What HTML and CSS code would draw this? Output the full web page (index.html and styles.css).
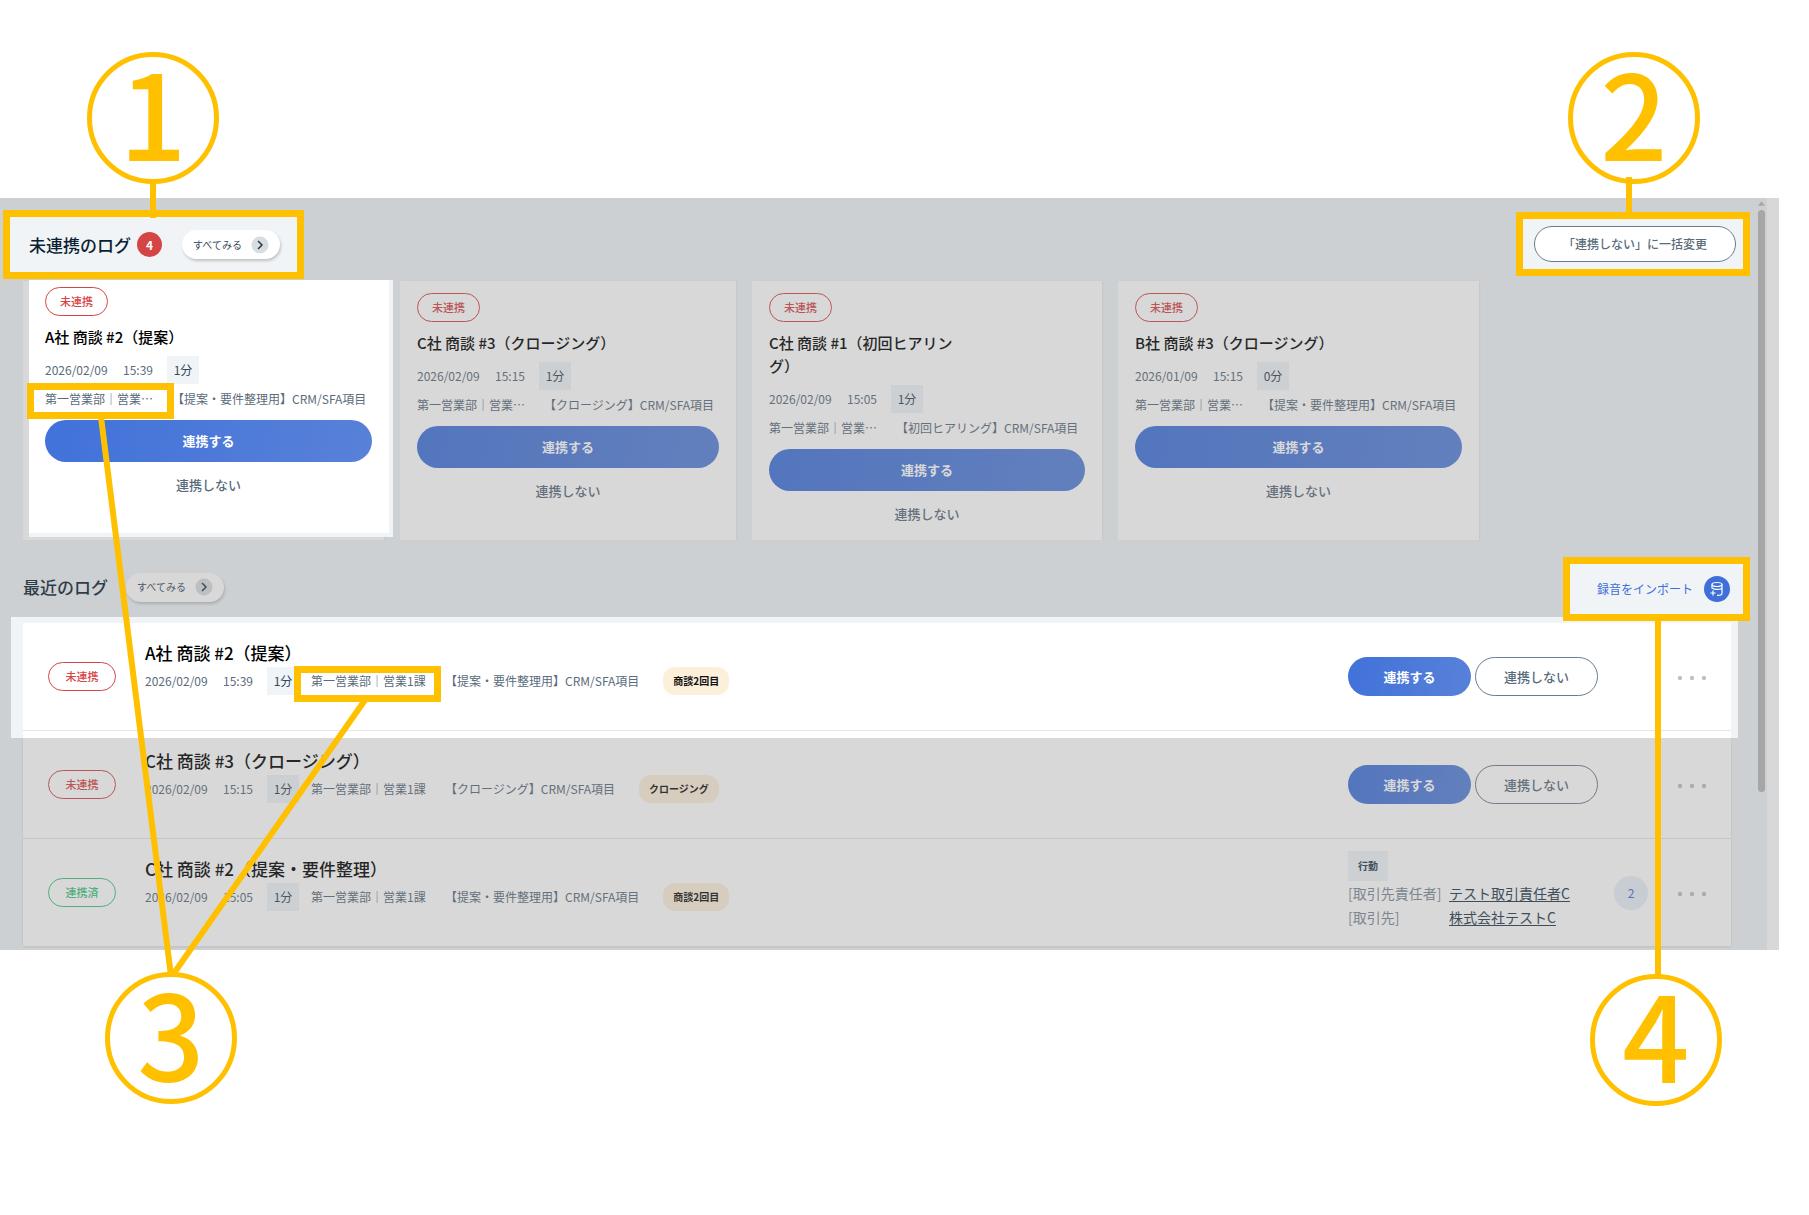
FILE: index.html
```html
<!DOCTYPE html>
<html lang="ja">
<head>
<meta charset="utf-8">
<title>商談ログ</title>
<link rel="stylesheet" href="styles.css">
</head>
<body>
<main class="panel">
  <div class="dim"></div>

  <section class="section">
    <header class="section-head section-head--pending">
      <div class="callout callout--title">
        <h2 class="section-title">未連携のログ</h2>
        <span class="count">4</span>
        <button class="see-all" type="button">すべてみる
          <svg class="see-all-icon" viewBox="0 0 18 18"><circle cx="9" cy="9" r="8.5" fill="#d8dde1"/><path d="M7 5l4 4-4 4" fill="none" stroke="#24394d" stroke-width="1.5"/></svg>
        </button>
      </div>
      <div class="callout callout--bulk">
        <button class="btn btn-outline btn-bulk" type="button">「連携しない」に一括変更</button>
      </div>
    </header>

    <ul class="cards">
      <li class="card-slot card-slot--wide">
        <article class="card card--focus">
          <span class="status">未連携</span>
          <h3 class="card-title">A社 商談 #2（提案）</h3>
          <p class="meta"><span class="date">2026/02/09</span><span class="time">15:39</span><span class="minutes">1分</span></p>
          <p class="team"><span class="team-name">第一営業部｜営業…</span><span>【提案・要件整理用】CRM/SFA項目</span></p>
          <button class="btn btn-primary btn-block" type="button">連携する</button>
          <button class="btn-text" type="button">連携しない</button>
        </article>
      </li>
      <li class="card-slot card-slot--narrow">
        <article class="card">
          <span class="status">未連携</span>
          <h3 class="card-title">C社 商談 #3（クロージング）</h3>
          <p class="meta"><span class="date">2026/02/09</span><span class="time">15:15</span><span class="minutes">1分</span></p>
          <p class="team"><span class="team-name">第一営業部｜営業…</span><span>【クロージング】CRM/SFA項目</span></p>
          <button class="btn btn-primary btn-block" type="button">連携する</button>
          <button class="btn-text" type="button">連携しない</button>
        </article>
      </li>
      <li class="card-slot card-slot--medium">
        <article class="card">
          <span class="status">未連携</span>
          <h3 class="card-title">C社 商談 #1（初回ヒアリング）</h3>
          <p class="meta"><span class="date">2026/02/09</span><span class="time">15:05</span><span class="minutes">1分</span></p>
          <p class="team"><span class="team-name">第一営業部｜営業…</span><span>【初回ヒアリング】CRM/SFA項目</span></p>
          <button class="btn btn-primary btn-block" type="button">連携する</button>
          <button class="btn-text" type="button">連携しない</button>
        </article>
      </li>
      <li class="card-slot card-slot--wide">
        <article class="card">
          <span class="status">未連携</span>
          <h3 class="card-title">B社 商談 #3（クロージング）</h3>
          <p class="meta"><span class="date">2026/01/09</span><span class="time">15:15</span><span class="minutes">0分</span></p>
          <p class="team"><span class="team-name">第一営業部｜営業…</span><span>【提案・要件整理用】CRM/SFA項目</span></p>
          <button class="btn btn-primary btn-block" type="button">連携する</button>
          <button class="btn-text" type="button">連携しない</button>
        </article>
      </li>
    </ul>
  </section>

  <section class="section">
    <header class="section-head section-head--recent">
      <div class="recent-title">
        <h2 class="section-title">最近のログ</h2>
        <button class="see-all" type="button">すべてみる
          <svg class="see-all-icon" viewBox="0 0 18 18"><circle cx="9" cy="9" r="8.5" fill="#d8dde1"/><path d="M7 5l4 4-4 4" fill="none" stroke="#24394d" stroke-width="1.5"/></svg>
        </button>
      </div>
      <div class="callout callout--import">
        <a class="import" href="#import">録音をインポート
          <svg class="import-icon" viewBox="0 0 26 26"><circle cx="13" cy="13" r="13" fill="#3f6fd8"/><g fill="none" stroke="#fff" stroke-width="1.2"><ellipse cx="13" cy="8.500" rx="5" ry="2"/><path d="M8 8.500v4M18 8.500v9c0 1-2 1.900-5 1.900M8.500 12.200c1 .8 2.500 1.100 4.500 1.100 3 0 5-.6 5-1.600M6.500 17h5M9 14.500v5"/></g></svg>
        </a>
      </div>
    </header>

    <ul class="rows">
      <li class="row row--focus">
        <div class="row-body">
          <span class="status status--row">未連携</span>
          <div class="info">
            <h3 class="row-title">A社 商談 #2（提案）</h3>
            <p class="meta"><span class="date">2026/02/09</span><span class="time">15:39</span><span class="minutes">1分</span><span class="dept">第一営業部｜営業1課</span><span>【提案・要件整理用】CRM/SFA項目</span><span class="tag">商談2回目</span></p>
          </div>
          <div class="actions">
            <button class="btn btn-primary" type="button">連携する</button>
            <button class="btn btn-outline" type="button">連携しない</button>
          </div>
          <button class="more" type="button" aria-label="メニュー"><svg viewBox="0 0 30 6"><g fill="#b9c4cc"><circle cx="3" cy="3" r="2.200"/><circle cx="15" cy="3" r="2.200"/><circle cx="27" cy="3" r="2.200"/></g></svg></button>
        </div>
      </li>
      <li class="row">
        <div class="row-body">
          <span class="status status--row">未連携</span>
          <div class="info">
            <h3 class="row-title">C社 商談 #3（クロージング）</h3>
            <p class="meta"><span class="date">2026/02/09</span><span class="time">15:15</span><span class="minutes">1分</span><span class="dept">第一営業部｜営業1課</span><span>【クロージング】CRM/SFA項目</span><span class="tag">クロージング</span></p>
          </div>
          <div class="actions">
            <button class="btn btn-primary" type="button">連携する</button>
            <button class="btn btn-outline" type="button">連携しない</button>
          </div>
          <button class="more" type="button" aria-label="メニュー"><svg viewBox="0 0 30 6"><g fill="#b9c4cc"><circle cx="3" cy="3" r="2.200"/><circle cx="15" cy="3" r="2.200"/><circle cx="27" cy="3" r="2.200"/></g></svg></button>
        </div>
      </li>
      <li class="row">
        <div class="row-body">
          <span class="status status--row status--done">連携済</span>
          <div class="info">
            <h3 class="row-title">C社 商談 #2（提案・要件整理）</h3>
            <p class="meta"><span class="date">2026/02/09</span><span class="time">15:05</span><span class="minutes">1分</span><span class="dept">第一営業部｜営業1課</span><span>【提案・要件整理用】CRM/SFA項目</span><span class="tag">商談2回目</span></p>
          </div>
          <div class="linked">
            <span class="kind">行動</span>
            <dl class="linked-list">
              <dt>[取引先責任者]</dt><dd><a href="#contact">テスト取引責任者C</a></dd>
              <dt>[取引先]</dt><dd><a href="#account">株式会社テストC</a></dd>
            </dl>
          </div>
          <span class="linked-count">2</span>
          <button class="more" type="button" aria-label="メニュー"><svg viewBox="0 0 30 6"><g fill="#b9c4cc"><circle cx="3" cy="3" r="2.200"/><circle cx="15" cy="3" r="2.200"/><circle cx="27" cy="3" r="2.200"/></g></svg></button>
        </div>
      </li>
    </ul>
  </section>

  <div class="gutter"></div>
  <svg class="scroll-arrow" viewBox="0 0 8 5"><path d="M4 0l4 5H0z" fill="#a6a6a6"/></svg>
  <div class="scroll-thumb"></div>

  <div class="notes">
    <div class="frame frame--card-dept"></div>
    <div class="frame frame--row-dept"></div>
    <svg class="leads" viewBox="0 0 400 600"><path d="M101 40L171 599M365 323L172 599" fill="none" stroke="#ffc000" stroke-width="6"/></svg>
    <div class="lead lead--1"></div>
    <div class="lead lead--2"></div>
    <div class="lead lead--4"></div>
    <div class="number number--1">1</div>
    <div class="number number--2">2</div>
    <div class="number number--3">3</div>
    <div class="number number--4">4</div>
  </div>
</main>
</body>
</html>
```
FILE: styles.css
```css
:root {
  --amber: #ffc000;
  --surface: #f0f4f6;
  --ink: #0c1f33;
  --muted: #5a6b7b;
  --red: #d64545;
  --blue: #3f6fd8;
}

* { box-sizing: border-box; }

body {
  margin: 0;
  min-height: 100vh;
  padding: 198px 30px 264px 0;
  background: #fff;
  color: var(--muted);
  font: 12px/20px "Noto Sans CJK JP", "Noto Sans", sans-serif;
}

h2, h3, p, ul, dl, dd { margin: 0; padding: 0; }
ul { list-style: none; }
button { font: inherit; color: inherit; border: 0; background: none; padding: 0; cursor: pointer; }

.panel {
  position: relative;
  padding: 12px 12px 3px 0;
  background: var(--surface);
}

/* grey veil over everything that is not in focus */
.dim {
  position: absolute;
  inset: 0;
  z-index: 1;
  background: rgba(127, 127, 127, .3);
}

.section-head { display: flex; justify-content: space-between; padding-right: 17px; }
.section-head--pending { padding-left: 3px; align-items: flex-start; margin-bottom: 2px; }
.section-head--recent { padding-left: 23px; margin: 17px 0 2px; }
.recent-title { display: flex; align-items: center; gap: 18px; padding-bottom: 4px; }
.section-title { font-size: 17px; line-height: 24px; font-weight: 500; color: var(--ink); }

.callout {
  position: relative;
  z-index: 3;
  display: flex;
  align-items: center;
  border: 7px solid var(--amber);
  background: var(--surface);
}
.callout--title { height: 69px; padding: 0 17px 0 19px; }
.callout--bulk { height: 64px; margin-top: 2px; padding: 0 7px 0 11px; }
.callout--import { height: 64px; padding: 0 13px 0 27px; }

.count {
  width: 25px;
  height: 25px;
  margin: 0 20px 0 6px;
  border-radius: 50%;
  background: var(--red);
  color: #fff;
  font-weight: 700;
  line-height: 25px;
  text-align: center;
}

.see-all {
  display: flex;
  align-items: center;
  justify-content: space-between;
  width: 98px;
  height: 29px;
  padding: 0 11px;
  border-radius: 15px;
  background: #fff;
  box-shadow: 1px 2px 3px rgba(0, 0, 0, .2);
  font-size: 10px;
  color: #33475b;
}
.see-all-icon { width: 18px; height: 18px; }

.import { display: flex; align-items: center; gap: 11px; color: var(--blue); text-decoration: none; }
.import-icon { width: 26px; height: 26px; }

.btn { height: 39px; border-radius: 21px; font-size: 13px; white-space: nowrap; }
.btn-primary { background: linear-gradient(100deg, #4172da, #5881d8); color: #fff; font-weight: 700; }
.btn-outline { border: 1px solid #6b7c8c; background: transparent; color: var(--muted); font-weight: 500; }
.btn-bulk { width: 202px; height: 36px; background: #fff; font-size: 12px; }
.btn-block { width: 100%; height: 42px; margin-top: 11px; }
.btn-text { display: block; margin: 13px auto 0; font-size: 13px; font-weight: 500; }

.cards { display: flex; gap: 16px; padding-left: 23px; height: 259px; }
.card-slot { flex: none; background: #fff; box-shadow: 1px 0 2px rgba(0, 0, 0, .06); }
.card-slot--wide { width: 361px; }
.card-slot--narrow { width: 336px; }
.card-slot--medium { width: 350px; }
.card { padding: 12px 17px 0; }
.card--focus {
  position: relative;
  z-index: 2;
  height: 257px;
  margin: -1px -9px 0 6px;
  padding: 7px 17px 0 16px;
  border: solid var(--surface);
  border-width: 0 4px 4px 0;
  background: #fff;
}
.card-title { max-width: 190px; margin-top: 9px; font-size: 15px; line-height: 23px; font-weight: 500; color: #000; white-space: nowrap; }
.card-slot--medium .card-title { white-space: normal; }
.card .meta { margin-top: 8px; }
.team { display: flex; gap: 14px; margin-top: 5px; white-space: nowrap; }
.team-name { min-width: 113px; }

.status {
  display: block;
  width: 63px;
  height: 29px;
  border: 1px solid var(--red);
  border-radius: 15px;
  color: var(--red);
  font-size: 11px;
  line-height: 27px;
  font-weight: 500;
  text-align: center;
}
.status--row { width: 68px; flex: none; }
.status--done { border-color: #3cc47c; color: #3cc47c; }

.meta { display: flex; align-items: center; gap: 12px; white-space: nowrap; }
.date { min-width: 66px; }
.time { min-width: 32px; }
.minutes {
  min-width: 32px;
  background: var(--surface);
  color: #33475b;
  line-height: 28px;
  text-align: center;
}
.dept { min-width: 122px; }
.tag {
  margin-left: 12px;
  padding: 0 10px;
  border-radius: 12px;
  background: #fdf0db;
  color: #111;
  font-size: 10px;
  line-height: 28px;
  font-weight: 700;
}

.rows { margin: 0 36px 0 23px; background: #fff; box-shadow: 0 0 2px rgba(0, 0, 0, .15); }
.row-body {
  display: flex;
  align-items: center;
  min-height: 108px;
  padding: 0 24px 0 25px;
  border-bottom: 1px solid #e4e6e8;
}
.row--focus { position: relative; z-index: 2; }
.row--focus::before,
.row--focus::after { content: ""; position: absolute; z-index: -1; }
.row--focus::before { inset: -6px -7px -7px -12px; background: var(--surface); }
.row--focus::after { inset: 0 0 -7px; background: #fff; }

.info { flex: 1; min-width: 0; padding: 0 0 18px 29px; }
.row-title { margin-bottom: 2px; font-size: 17px; line-height: 24px; font-weight: 500; color: #000; }
.actions { display: flex; gap: 4px; width: 329px; flex: none; }
.actions .btn { width: 123px; }
.more { width: 30px; height: 20px; flex: none; }
.more svg { display: block; width: 30px; height: 6px; margin: 8px 0 6px; }

.linked { width: 266px; flex: none; padding-bottom: 5px; }
.kind {
  display: block;
  width: 40px;
  background: var(--surface);
  color: #24394d;
  font-size: 10px;
  line-height: 30px;
  font-weight: 700;
  text-align: center;
}
.linked-list { display: grid; grid-template-columns: 101px 1fr; font-size: 14px; line-height: 24px; color: #7d8a96; }
.linked-list a { color: #24394d; text-underline-offset: 2px; }
.linked-count {
  width: 34px;
  margin-right: 29px;
  border-radius: 50%;
  background: #e9eef8;
  color: var(--blue);
  line-height: 34px;
  text-align: center;
}

.gutter { position: absolute; inset: 0 0 0 auto; width: 12px; background: #d8d8d8; z-index: 2; }
.scroll-arrow { position: absolute; right: 14px; top: 3px; width: 7px; height: 5px; z-index: 2; }
.scroll-thumb { position: absolute; right: 14px; top: 12px; width: 7px; height: 582px; border-radius: 4px; background: #a6a6a6; z-index: 2; }

/* numbered annotations drawn over the panel */
.notes { position: absolute; inset: 0; z-index: 4; pointer-events: none; }
.frame { position: absolute; width: 147px; height: 36px; border: 7px solid var(--amber); }
.frame--card-dept { left: 27px; top: 185px; }
.frame--row-dept { left: 294px; top: 468px; }
.leads { position: absolute; left: 0; top: 179px; width: 400px; height: 600px; }
.lead { position: absolute; width: 6px; background: var(--amber); }
.lead--1 { left: 150px; top: -16px; height: 36px; }
.lead--2 { right: 147px; top: -21px; height: 36px; }
.lead--4 { right: 118px; top: 421px; height: 360px; }
.number {
  position: absolute;
  width: 132px;
  height: 132px;
  border: 5px solid var(--amber);
  border-radius: 50%;
  color: var(--amber);
  font-size: 118px;
  line-height: 106px;
  font-weight: 500;
  text-align: center;
}
.number--1 { left: 87px; top: -146px; }
.number--2 { right: 79px; top: -146px; }
.number--3 { left: 105px; top: 774px; }
.number--4 { right: 57px; top: 776px; }
```
